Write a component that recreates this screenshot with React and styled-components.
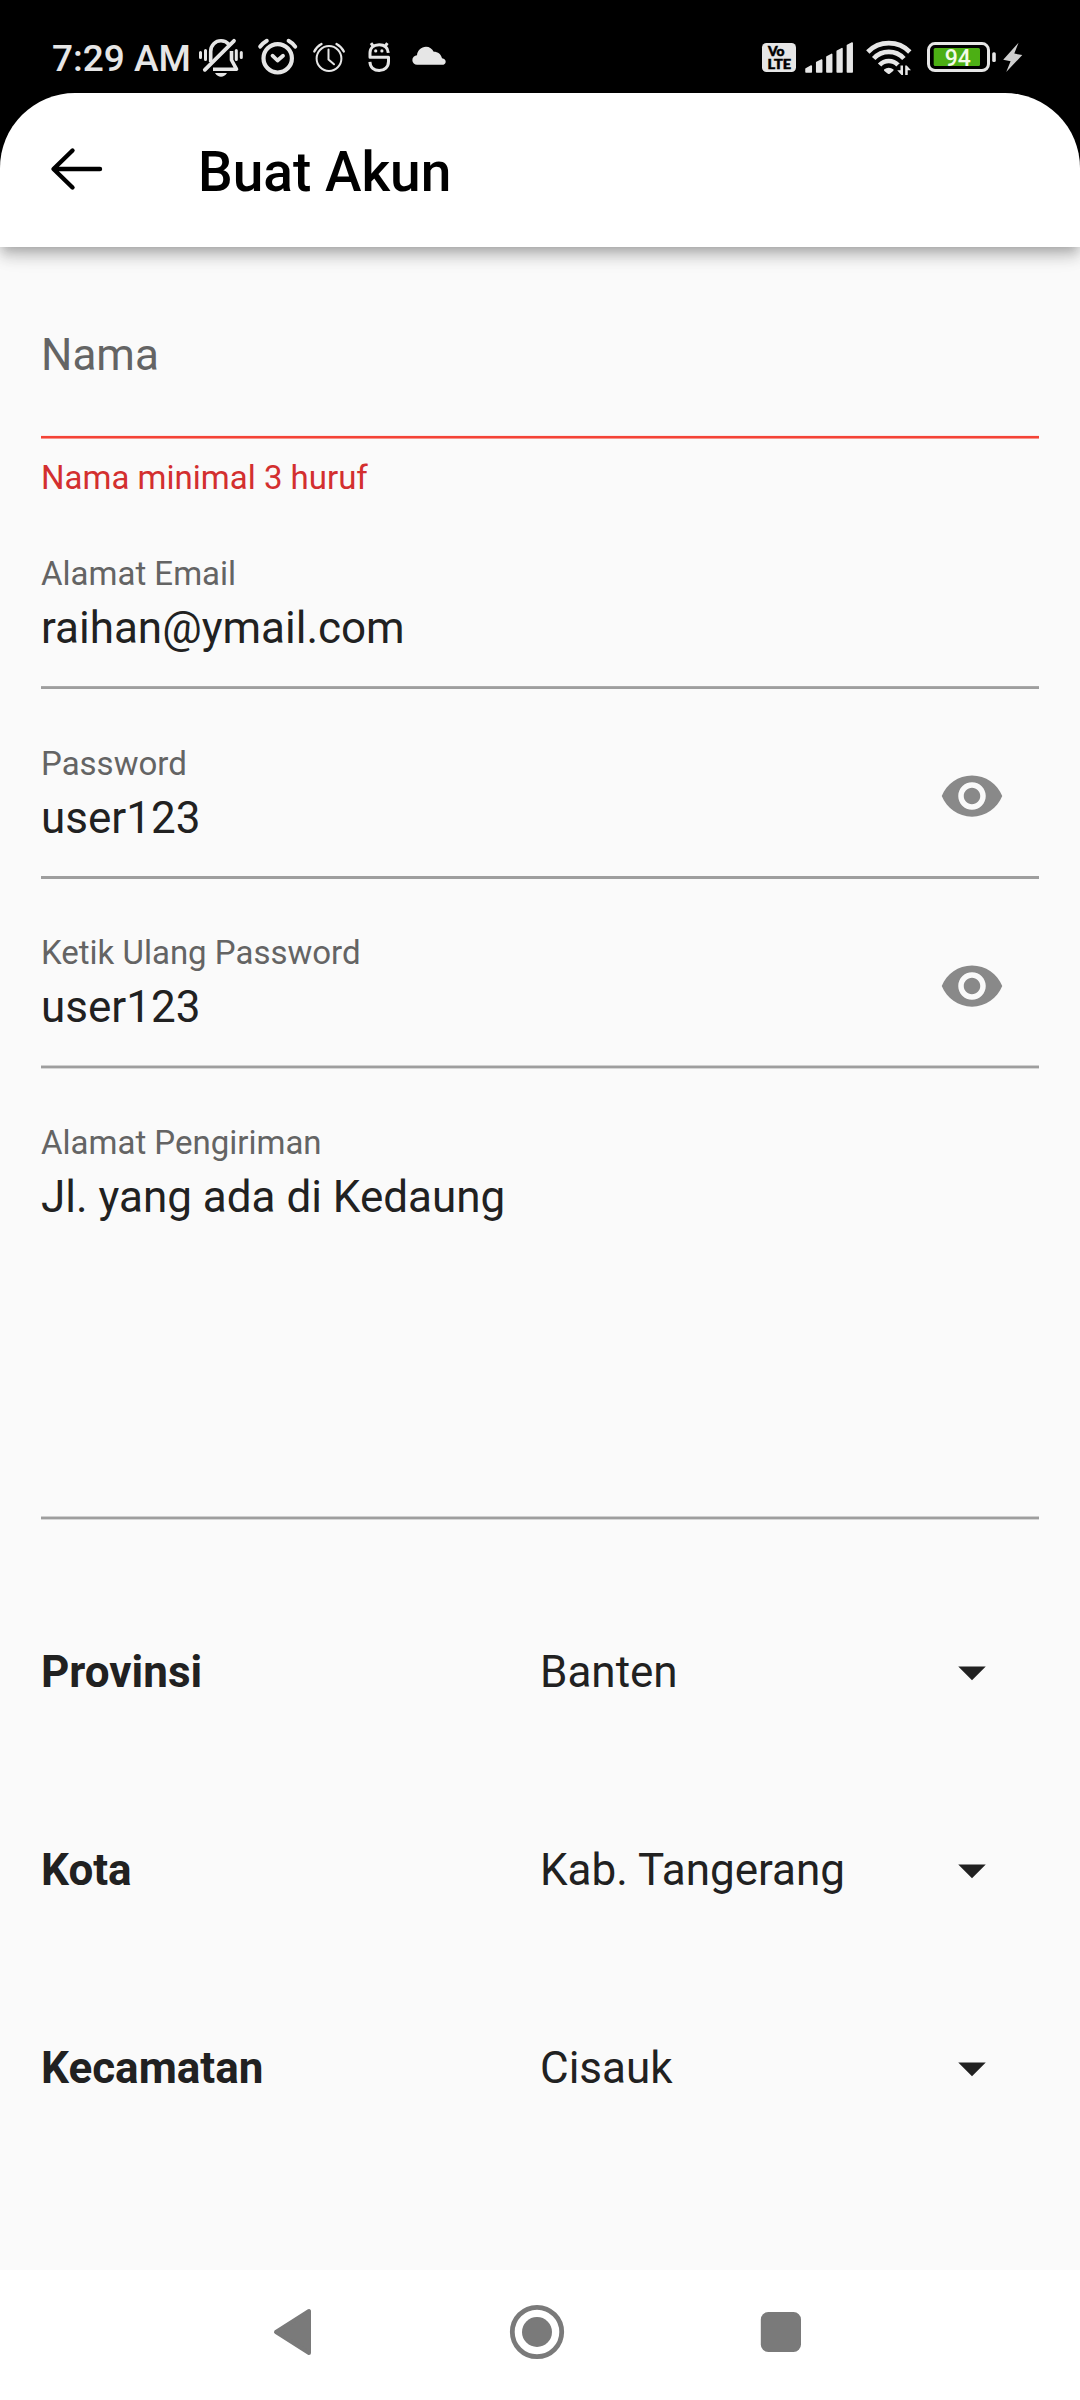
import React from "react";
import styled, { createGlobalStyle } from "styled-components";

const GlobalStyle = createGlobalStyle`
  * { box-sizing: border-box; }
  body { margin: 0; background: #000; font-family: Roboto, "Noto Sans", sans-serif; }
`;

const Screen = styled.div`
  width: 1080px;
  height: 2400px;
  display: flex;
  flex-direction: column;
  background: #000;
  overflow: hidden;
`;

const StatusBar = styled.header`
  height: 93px;
  flex: none;
  display: flex;
  justify-content: space-between;
  padding: 0 56px 0 52px;
  color: #e6e6e6;
`;

const StatusGroup = styled.div`
  display: flex;
  align-items: flex-start;
`;

const Clock = styled.span`
  width: 142px;
  padding-top: 37px;
  font-size: 37px;
  line-height: 44px;
  font-weight: 500;
  white-space: nowrap;
`;

const Glyph = styled.svg`
  display: block;
  flex: none;
`;

const AppBar = styled.div`
  position: relative;
  z-index: 1;
  height: 154px;
  flex: none;
  display: flex;
  align-items: center;
  padding-left: 44px;
  background: #fff;
  border-radius: 75px 75px 0 0;
  box-shadow: 0 5px 11px -3px rgba(0, 0, 0, 0.2), 0 11px 14px 0 rgba(0, 0, 0, 0.14),
    0 3px 27px 0 rgba(0, 0, 0, 0.1);
`;

const BackButton = styled.button`
  width: 66px;
  height: 66px;
  margin: 0 88px 2px 0;
  padding: 0;
  border: 0;
  background: none;
`;

const Title = styled.h1`
  margin: 4px 0 0;
  font-size: 55px;
  line-height: 64px;
  font-weight: 500;
  color: #000;
`;

const Form = styled.main`
  flex: 1;
  display: flex;
  flex-direction: column;
  padding: 82px 41px 0;
  background: #fafafa;
`;

const Stack = styled.div`
  display: flex;
  flex-direction: column;
  gap: 54.6px;
  margin-top: 58px;
`;

const Field = styled.div`
  display: flex;
  flex-direction: column;
`;

const FieldBody = styled.div`
  display: flex;
  align-items: flex-start;
  justify-content: space-between;
  height: ${(p) => p.$height || 131}px;
  padding-right: 34px;
`;

const Label = styled.div`
  margin-bottom: 9px;
  font-size: 33px;
  line-height: 38px;
  color: #646464;
`;

const Value = styled.div`
  font-size: 44px;
  line-height: 52px;
  white-space: nowrap;
  color: #212121;
`;

const Placeholder = styled(Value)`
  height: 106px;
  color: #646464;
`;

const ErrorText = styled.div`
  margin-top: 20px;
  font-size: 33px;
  line-height: 38px;
  color: #d32f2f;
`;

const Rule = styled.div`
  height: 4px;
  background: linear-gradient(
    to bottom,
    ${(p) => p.$top} 1px,
    ${(p) => p.$main} 1px 3px,
    ${(p) => p.$bottom} 3px
  );
`;

const EyeButton = styled.button`
  width: 66px;
  height: 66px;
  margin-top: 18.6px;
  padding: 0;
  border: 0;
  background: none;
`;

const Selects = styled.div`
  display: flex;
  flex-direction: column;
  gap: 66px;
  margin-top: 86px;
`;

const SelectRow = styled.div`
  display: grid;
  grid-template-columns: 1fr 1fr;
  align-items: center;
  height: 132px;
`;

const SelectName = styled(Value)`
  font-weight: 700;
`;

const SelectControl = styled.div`
  display: flex;
  align-items: center;
  justify-content: space-between;
  padding-right: 34px;
`;

const NavBar = styled.nav`
  flex: none;
  height: 130px;
  display: flex;
  gap: 172.5px;
  padding: 26px 0 0 256px;
  background: #fff;
`;

/* Status glyphs share the bar's coordinate space: each shows its own slice of it. */
const StatusGlyph = ({ x, width, children }) => (
  <Glyph width={width} height="93" viewBox={`${x} 0 ${width} 93`} fill="none" stroke="none">
    {children}
  </Glyph>
);

const ink = "#e6e6e6";

const MutedBell = () => (
  <StatusGlyph x={194} width={56}>
    <g stroke={ink} strokeWidth="3" strokeLinecap="round">
      <path d="M200.5 52.5v5M205.5 50.5v9M236.3 50.5v9M241.3 52.5v5" />
    </g>
    <path d="M210.7 62V51.5C210.7 45 215.500 40.800 221 40.800C224.500 40.800 227 42.200 229 44.500" stroke={ink} strokeWidth="3.600" />
    <path d="M231.500 51V60L236.500 69.200H213" stroke={ink} strokeWidth="3.600" strokeLinejoin="round" />
    <path d="M204.800 69.800L234 40.800" stroke={ink} strokeWidth="3.800" strokeLinecap="round" />
    <path d="M215 73H227Q224.500 76.800 221 76.800T215 73Z" fill={ink} />
  </StatusGlyph>
);

const AlarmBold = () => (
  <StatusGlyph x={250} width={56}>
    <g stroke={ink} strokeLinecap="round" strokeLinejoin="round">
      <circle cx="277.700" cy="58.300" r="14.200" strokeWidth="4.200" />
      <path d="M272.500 55.700L277.500 60.500L283 55.700" strokeWidth="3.800" />
      <path d="M260.200 46.600Q263 43 266.800 40.800M288.600 40.800Q292.500 43 295.200 46.600" strokeWidth="4" />
    </g>
  </StatusGlyph>
);

const AlarmThin = () => (
  <StatusGlyph x={306} width={48}>
    <g stroke={ink} strokeLinecap="round" strokeLinejoin="round">
      <circle cx="329" cy="58.500" r="12.400" strokeWidth="2" />
      <path d="M328.500 49.500V59.500L334 64.300" strokeWidth="2" />
      <path d="M314.300 51.500Q316.500 46.700 321.500 44M336.500 44Q341.500 46.700 343.800 51.500" strokeWidth="2.300" />
    </g>
  </StatusGlyph>
);

const RobotS = () => (
  <StatusGlyph x={354} width={52}>
    <g stroke={ink} strokeWidth="3" strokeLinejoin="round">
      <path d="M388.300 52.800C387.700 47.500 384 44.800 379.200 44.800C373.500 44.800 370 48 370 53V57.200H388.500V61.500C388.500 67 384.500 70.500 379.200 70.500C374 70.500 370.200 67.500 369.900 61.800" />
      <path d="M373.500 46.500L371 43.200M384.900 46.500L387.400 43.200" />
    </g>
    <circle cx="375.700" cy="50.900" r="1.600" fill={ink} />
    <circle cx="381.900" cy="50.900" r="1.600" fill={ink} />
  </StatusGlyph>
);

const Cloud = () => (
  <StatusGlyph x={406} width={46}>
    <path
      d="M417.200 64.800A4.600 4.600 0 0 1 417 55.300C417.300 50.300 421.300 46.700 426 46.700C429.500 46.700 432.300 48.700 433.700 51.800C438 51.800 441.300 54.500 442 58.300C444.500 58.700 445.700 60 445.700 61.700C445.700 63.600 444.200 64.800 442 64.800Z"
      fill={ink}
    />
  </StatusGlyph>
);

const VoLte = () => (
  <StatusGlyph x={758} width={44}>
    <rect x="762" y="43" width="34" height="29" rx="4.500" fill={ink} />
    <g fill="#000" stroke="#000" strokeWidth="0.500" fontFamily="Lato, sans-serif" fontWeight="900" fontSize="13">
      <text x="768" y="56" textLength="16.500" lengthAdjust="spacingAndGlyphs">Vo</text>
      <text x="767.600" y="68.600" textLength="23.500" lengthAdjust="spacingAndGlyphs">LTE</text>
    </g>
  </StatusGlyph>
);

const Signal = () => (
  <StatusGlyph x={802} width={58}>
    <g fill={ink} stroke={ink} strokeWidth="1.500" strokeLinejoin="round">
      <path d="M806 68.800L811.300 66V72H806Z" />
      <path d="M816.700 62.500L821.700 60V72H816.700Z" />
      <path d="M826.900 57L831.700 54.400V72H826.900Z" />
      <path d="M837.200 51.200L842 48.600V72H837.200Z" />
      <path d="M847.400 45.500L852.200 43V72H847.400Z" />
    </g>
  </StatusGlyph>
);

const Wifi = () => (
  <StatusGlyph x={860} width={62}>
    <g stroke={ink} strokeWidth="4.700">
      <path d="M867.800 52A29.500 29.500 0 0 1 909.800 52" />
      <path d="M873.700 58.500A20.500 20.500 0 0 1 903.900 58.500" />
      <path d="M879.600 65A12.600 12.600 0 0 1 898 65" />
    </g>
    <path d="M884 69.500Q888.800 65.800 893.600 69.500Q894 70.500 892.500 71.600L889.700 73.700Q888.800 74.300 887.900 73.700L885 71.600Q883.500 70.500 884 69.500Z" fill={ink} />
    <path d="M898.500 64.500H912V76H896.500V68Z" fill="#000" />
    <path d="M900.500 65.500H903V75H901.500L897.200 70.300H900.500Z" fill={ink} />
    <path d="M905.200 65.500H906.700L911 70.300H907.700V75H905.200Z" fill={ink} />
  </StatusGlyph>
);

const Battery = () => (
  <StatusGlyph x={922} width={78}>
    <rect x="928.500" y="43.600" width="60" height="26.900" rx="6.500" stroke={ink} strokeWidth="3" />
    <rect x="933.700" y="48" width="46.300" height="18" rx="1.500" fill="#4caf14" />
    <rect x="992.200" y="52.200" width="3.600" height="9.800" rx="1.500" fill={ink} />
    <text x="957.800" y="65.500" fontSize="23" fontWeight="500" textAnchor="middle" fill="#f4fbe8" fontFamily="Roboto, sans-serif">
      94
    </text>
  </StatusGlyph>
);

const Bolt = () => (
  <StatusGlyph x={1000} width={24}>
    <path d="M1018.500 42.700L1003.200 59.800L1010.600 61.200L1006.200 72L1022.300 55L1014.300 53.600Z" fill="#cfcfcf" />
  </StatusGlyph>
);

const BackArrow = () => (
  <Glyph width="66" height="66" viewBox="44 136 66 66" fill="none" stroke="#000" strokeWidth="4.400" strokeLinecap="round" strokeLinejoin="round">
    <path d="M100 169H54M72.500 150.500L53.500 169L72.500 187.500" />
  </Glyph>
);

const Eye = () => (
  <Glyph width="66" height="66" viewBox="0 0 24 24" fill="#898989">
    <path d="M12 4.500C7 4.500 2.730 7.610 1 12c1.730 4.390 6 7.500 11 7.500s9.270-3.110 11-7.500c-1.730-4.390-6-7.500-11-7.500zM12 17c-2.760 0-5-2.240-5-5s2.240-5 5-5 5 2.240 5 5-2.240 5-5 5zm0-8c-1.660 0-3 1.340-3 3s1.340 3 3 3 3-1.340 3-3-1.340-3-3-3z" />
  </Glyph>
);

const Caret = () => (
  <Glyph width="66" height="66" viewBox="0 0 24 24" fill="#212121">
    <path d="M7 10l5 5 5-5z" />
  </Glyph>
);

const TextField = ({ label, value, height, edge, secret }) => (
  <Field>
    <FieldBody $height={height}>
      <div>
        <Label>{label}</Label>
        <Value>{value}</Value>
      </div>
      {secret && (
        <EyeButton>
          <Eye />
        </EyeButton>
      )}
    </FieldBody>
    <Rule $top={edge[0]} $main="#9e9e9e" $bottom={edge[1]} />
  </Field>
);

const selects = [
  ["Provinsi", "Banten"],
  ["Kota", "Kab. Tangerang"],
  ["Kecamatan", "Cisauk"],
];

export default function App() {
  return (
    <Screen>
      <GlobalStyle />
      <StatusBar>
        <StatusGroup>
          <Clock>7:29 AM</Clock>
          <MutedBell />
          <AlarmBold />
          <AlarmThin />
          <RobotS />
          <Cloud />
        </StatusGroup>
        <StatusGroup>
          <VoLte />
          <Signal />
          <Wifi />
          <Battery />
          <Bolt />
        </StatusGroup>
      </StatusBar>
      <AppBar>
        <BackButton>
          <BackArrow />
        </BackButton>
        <Title>Buat Akun</Title>
      </AppBar>
      <Form>
        <Placeholder>Nama</Placeholder>
        <Rule $top="#fbe9e8" $main="#f44336" $bottom="#f8938b" />
        <ErrorText>Nama minimal 3 huruf</ErrorText>
        <Stack>
          <TextField label="Alamat Email" value="raihan@ymail.com" edge={["#a9a9a9", "#fafafa"]} />
          <TextField label="Password" value="user123" edge={["#9e9e9e", "#fafafa"]} secret />
          <TextField label="Ketik Ulang Password" value="user123" edge={["#cfcfcf", "#d6d6d6"]} secret />
          <TextField label="Alamat Pengiriman" value="Jl. yang ada di Kedaung" edge={["#cfcfcf", "#d6d6d6"]} height={392.2} />
        </Stack>
        <Selects>
          {selects.map(([name, value]) => (
            <SelectRow key={name}>
              <SelectName>{name}</SelectName>
              <SelectControl>
                <Value>{value}</Value>
                <Caret />
              </SelectControl>
            </SelectRow>
          ))}
        </Selects>
      </Form>
      <NavBar>
        <Glyph width="72" height="72" viewBox="0 0 72 72" fill="#7a7a7a" stroke="#7a7a7a" strokeWidth="4" strokeLinejoin="round">
          <path d="M20 36L53 15V57Z" />
        </Glyph>
        <Glyph width="72" height="72" viewBox="0 0 72 72" fill="none">
          <circle cx="36" cy="36" r="24.700" stroke="#7a7a7a" strokeWidth="4.800" />
          <circle cx="36" cy="36" r="15" fill="#7a7a7a" />
        </Glyph>
        <Glyph width="72" height="72" viewBox="0 0 72 72" fill="#7a7a7a">
          <rect x="15.800" y="16" width="40.200" height="40" rx="7.500" />
        </Glyph>
      </NavBar>
    </Screen>
  );
}
